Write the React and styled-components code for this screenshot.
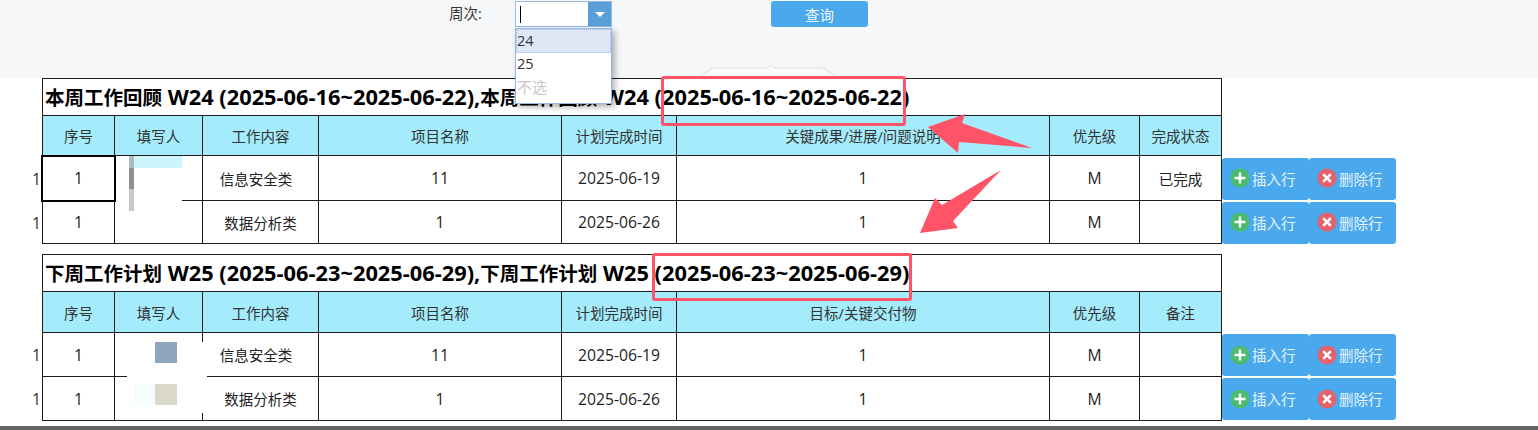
import React from "react";
import styled, { createGlobalStyle } from "styled-components";

const FONT = `"Open Sans", "Noto Sans CJK SC", "Noto Sans", sans-serif`;
const LINE = "#1c1c1c";
const BLUE = "#4aa9ec";
const RED = "#ff5468";

const GlobalStyle = createGlobalStyle`
  html, body { margin: 0; padding: 0; background: #fff; overflow: hidden; }
  body { font-family: ${FONT}; color: #222; }
`;

const Page = styled.div`
  position: relative;
  width: 1538px;
  height: 430px;
  overflow: hidden;
`;

const Toolbar = styled.div`
  display: flex;
  align-items: flex-start;
  height: 78px;
  box-sizing: border-box;
  padding: 1px 0 0 449px;
  background: #f6f7f9;
`;

const FieldLabel = styled.label`
  width: 66px;
  height: 26px;
  line-height: 26px;
  font-size: 14.5px;
  color: #333;
`;

const Combo = styled.div`
  position: relative;
  display: flex;
  width: 97px;
  height: 26px;
  box-sizing: border-box;
  border: 1px solid #95b8e7;
  background: #fff;
`;

const ComboInput = styled.div`
  flex: 1;
  padding: 4px 0 0 4px;
`;

const Caret = styled.div`
  width: 1px;
  height: 17px;
  background: #000;
`;

const ComboArrow = styled.div`
  display: flex;
  align-items: center;
  justify-content: center;
  width: 23px;
  background: #5b9fd8;
`;

const ArrowDown = styled.div`
  width: 0;
  height: 0;
  border-left: 5px solid transparent;
  border-right: 5px solid transparent;
  border-top: 5px solid #fff;
`;

const ComboMenu = styled.ul`
  position: absolute;
  z-index: 5;
  top: 26px;
  left: -1px;
  width: 97px;
  height: 76px;
  box-sizing: border-box;
  margin: 0;
  padding: 0;
  list-style: none;
  background: #fff;
  border: 1px solid #95b8e7;
  box-shadow: 3px 3px 6px rgba(0, 0, 0, 0.3);
`;

const ComboItem = styled.li`
  height: 24px;
  line-height: 21px;
  box-sizing: border-box;
  font-size: ${(p) => (p.$muted ? 15 : 14.5)}px;
  padding-left: ${(p) => (p.$active ? 0 : 1)}px;
  color: ${(p) => (p.$muted ? "#c8c8c8" : "#333")};
  background: ${(p) => (p.$active ? "#dfe7f7" : "transparent")};
  border: ${(p) => (p.$active ? "1px dotted #9ab8e8" : "none")};
`;

const QueryButton = styled.button`
  width: 97px;
  height: 26px;
  margin-left: 159px;
  padding: 0;
  border: none;
  border-radius: 3px;
  background: ${BLUE};
  color: #eef7fe;
  font-family: ${FONT};
  font-size: 14.5px;
`;

const Sheet = styled.section`
  display: grid;
  grid-template-columns: 42px 73px 88px 116px 243px 115px 373px 90px 82px 1fr;
  grid-template-rows: ${(p) => p.$rows};
  margin-bottom: ${(p) => p.$gap}px;
`;

const SheetTitle = styled.h2`
  grid-column: 2 / 10;
  margin: 0;
  padding-left: 2px;
  box-sizing: border-box;
  border: 1px solid ${LINE};
  font-size: 19.5px;
  font-weight: 700;
  line-height: 36px;
  color: #000;
  white-space: nowrap;
`;

const TitleLatin = styled.span`
  font-size: 21.8px;
`;

const Cell = styled.div`
  display: flex;
  align-items: center;
  justify-content: center;
  box-sizing: border-box;
  grid-column: ${(p) => p.$col};
  border-right: 1px solid ${LINE};
  border-bottom: 1px solid ${LINE};
  border-left: ${(p) => (p.$first ? `1px solid ${LINE}` : "none")};
  background: ${(p) => (p.$head ? "#a4ecfb" : "#fff")};
  font-size: ${(p) => (p.$latin ? 15.7 : 14.5)}px;
  color: ${(p) => (p.$head ? "#333" : "#222")};
  padding-right: ${(p) => p.$nudge || 0}px;
  outline: ${(p) => (p.$selected ? "2px solid #000" : "none")};
  outline-offset: -1px;
  position: ${(p) => (p.$selected ? "relative" : "static")};
  z-index: ${(p) => (p.$selected ? 1 : "auto")};
`;

const RowNumber = styled.div`
  grid-column: 1;
  display: flex;
  align-items: center;
  justify-content: flex-end;
  padding-right: 1px;
  font-size: 15.7px;
  color: #333;
`;

const Actions = styled.div`
  grid-column: 10;
  display: flex;
  align-items: center;
`;

const ActionButton = styled.button`
  display: flex;
  align-items: center;
  gap: 2px;
  width: 87px;
  height: 42px;
  padding: 0 0 1px 8px;
  border: none;
  border-radius: 3px;
  background: ${BLUE};
  color: #e8f4fd;
  font-family: ${FONT};
  font-size: 14.5px;
`;

const BottomBar = styled.div`
  height: 4px;
  background: #666;
`;

const Annotation = styled.div`
  position: absolute;
  z-index: 3;
  left: ${(p) => p.$x}px;
  top: ${(p) => p.$y}px;
  width: ${(p) => p.$w}px;
  height: ${(p) => p.$h}px;
  box-sizing: border-box;
  border: 3px solid ${RED};
  border-radius: 3px;
`;

const Patch = styled.div`
  position: absolute;
  z-index: 2;
  left: ${(p) => p.$x}px;
  top: ${(p) => p.$y}px;
  width: ${(p) => p.$w}px;
  height: ${(p) => p.$h}px;
  background: ${(p) => p.$color};
`;

const Overlay = styled.svg`
  position: absolute;
  z-index: 3;
  left: 0;
  top: 0;
  pointer-events: none;
`;

const PlusIcon = () => (
  <svg width="20" height="20" viewBox="0 0 20 20">
    <circle cx="10" cy="10" r="9.5" fill="#4cba6f" />
    <path d="M10 4.5v11M4.5 10h11" stroke="#fff" strokeWidth="2.4" />
  </svg>
);

const CloseIcon = () => (
  <svg width="20" height="20" viewBox="0 0 20 20">
    <circle cx="10" cy="10" r="9.5" fill="#e5616b" />
    <path d="M6.2 6.2l7.6 7.6M13.8 6.2l-7.6 7.6" stroke="#fff" strokeWidth="2.6" />
  </svg>
);

const ROWS = [
  { category: "信息安全类", nudge: 9, project: "11", date: "2025-06-19" },
  { category: "数据分析类", nudge: 0, project: "1", date: "2025-06-26" },
];

const ReportTable = ({ name, range, rowsTemplate, gap, resultHead, lastHead, status, selectFirst }) => {
  const heads = ["序号", "填写人", "工作内容", "项目名称", "计划完成时间", resultHead, "优先级", lastHead];

  return (
    <Sheet $rows={rowsTemplate} $gap={gap}>
      <SheetTitle>
        {name}<TitleLatin> {range},</TitleLatin>{name}<TitleLatin> {range}</TitleLatin>
      </SheetTitle>
      {heads.map((text, i) => (
        <Cell key={text} $head $first={i === 0} $col={i + 2}>
          {text}
        </Cell>
      ))}
      {ROWS.map((row, i) => (
        <React.Fragment key={row.category}>
          <RowNumber>1</RowNumber>
          <Cell $latin $first $col={2} $selected={selectFirst && i === 0}>1</Cell>
          <Cell $col={3} />
          <Cell $col={4} $nudge={row.nudge}>{row.category}</Cell>
          <Cell $latin $col={5}>{row.project}</Cell>
          <Cell $latin $col={6}>{row.date}</Cell>
          <Cell $latin $col={7}>1</Cell>
          <Cell $latin $col={8}>M</Cell>
          <Cell $col={9}>{i === 0 ? status : ""}</Cell>
          <Actions>
            <ActionButton><PlusIcon />插入行</ActionButton>
            <ActionButton><CloseIcon />删除行</ActionButton>
          </Actions>
        </React.Fragment>
      ))}
    </Sheet>
  );
};

const App = () => (
  <Page>
    <GlobalStyle />
    <Toolbar>
      <FieldLabel>周次:</FieldLabel>
      <Combo>
        <ComboInput><Caret /></ComboInput>
        <ComboArrow><ArrowDown /></ComboArrow>
        <ComboMenu>
          <ComboItem $active>24</ComboItem>
          <ComboItem>25</ComboItem>
          <ComboItem $muted>不选</ComboItem>
        </ComboMenu>
      </Combo>
      <QueryButton>查询</QueryButton>
    </Toolbar>

    <ReportTable
      name="本周工作回顾"
      range="W24 (2025-06-16~2025-06-22)"
      rowsTemplate="38px 40px 45px 43px"
      gap={10}
      resultHead="关键成果/进展/问题说明"
      lastHead="完成状态"
      status="已完成"
      selectFirst
    />
    <ReportTable
      name="下周工作计划"
      range="W25 (2025-06-23~2025-06-29)"
      rowsTemplate="38px 41px 44px 44px"
      gap={5}
      resultHead="目标/关键交付物"
      lastHead="备注"
      status=""
    />
    <BottomBar />

    {/* redacted names */}
    <Patch $x={116} $y={168} $w={66} $h={34} $color="#fff" />
    <Patch $x={134} $y={156} $w={48} $h={12} $color="#cdf4fb" />
    <Patch $x={129} $y={156} $w={5} $h={12} $color="#a9bcc0" />
    <Patch $x={129} $y={168} $w={5} $h={21} $color="#909090" />
    <Patch $x={129} $y={189} $w={5} $h={22} $color="#c8c8c8" />
    <Patch $x={127} $y={342} $w={80} $h={71} $color="#fff" />
    <Patch $x={155} $y={342} $w={22} $h={21} $color="#8fa5bc" />
    <Patch $x={155} $y={384} $w={22} $h={21} $color="#d9d8cb" />
    <Patch $x={134} $y={384} $w={21} $h={21} $color="#f5fdff" />

    {/* screenshot markup */}
    <Annotation $x={661} $y={76} $w={245} $h={50} />
    <Annotation $x={652} $y={253} $w={260} $h={48} />
    <Overlay width="1538" height="430" viewBox="0 0 1538 430">
      <path d="M702 76l10-8h56l3-3 3 3h49l12 8" fill="#fbfbfc" stroke="#dcdcdc" />
      <path d="M928 127L965 114 962 123 1032 148 959 142 958 153Z" fill={RED} />
      <path d="M1001 170L942 205 935 198 920 233 958 228 953 221Z" fill={RED} />
    </Overlay>
  </Page>
);

export default App;
